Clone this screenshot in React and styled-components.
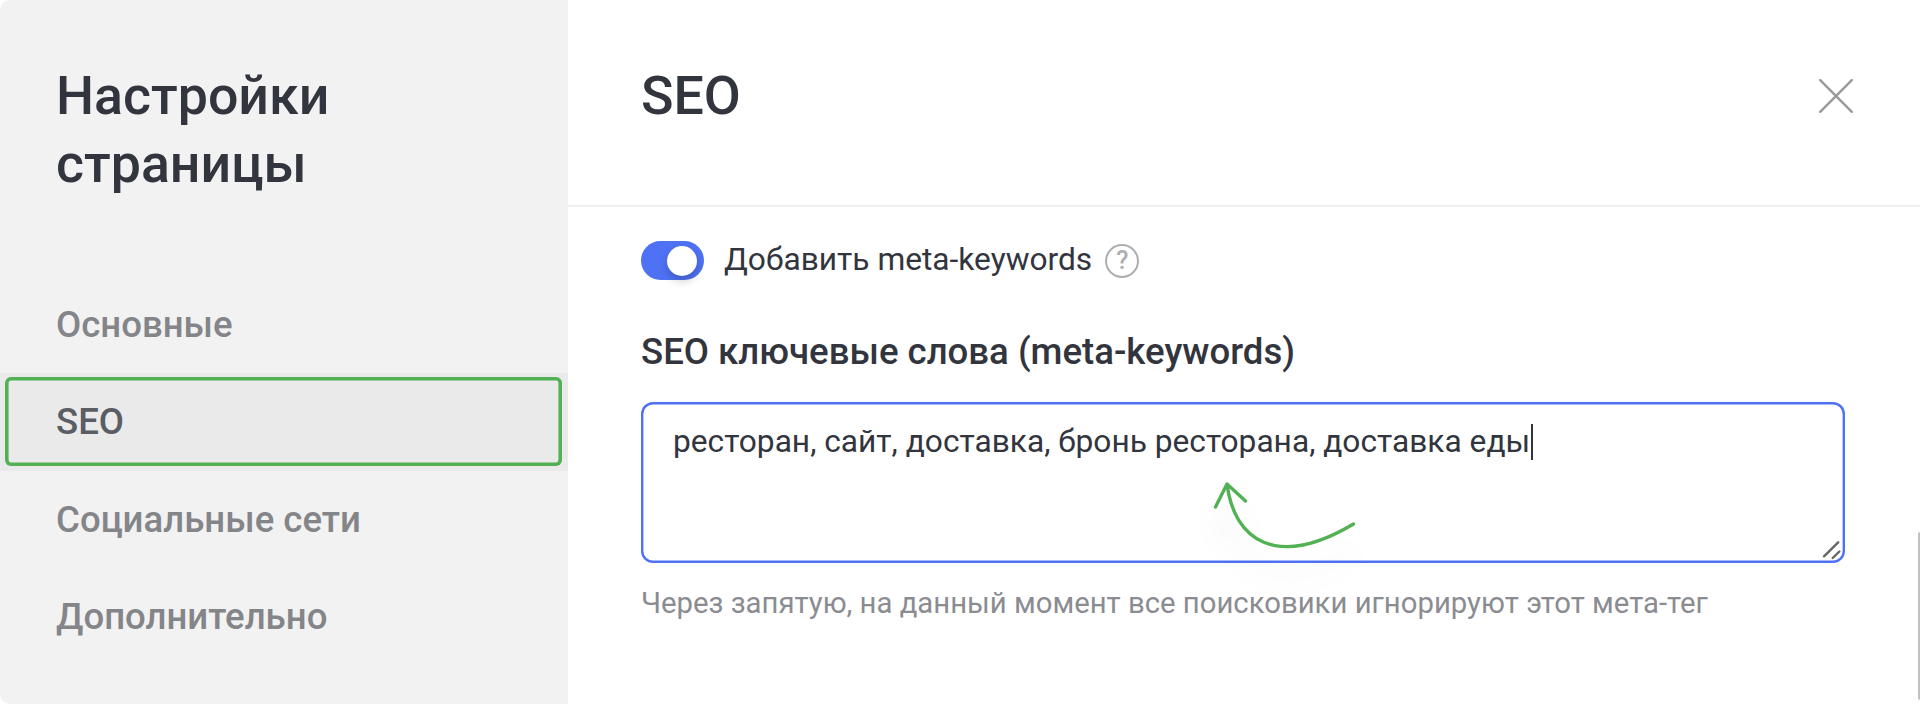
import React from 'react'
import styled, { createGlobalStyle } from 'styled-components'

const menu = [
  { id: 'main', title: 'Основные' },
  { id: 'seo', title: 'SEO' },
  { id: 'social', title: 'Социальные сети' },
  { id: 'extra', title: 'Дополнительно' },
]

const App = () => {
  const active = 'seo'
  return (
    <>
      <GlobalStyle />
      <StyleModal>
        <StyleSideBar>
          <StyleTitle>Настройки<br />страницы</StyleTitle>
          <StyleMenu>
            {menu.map((item) => (
              <StyleMenuItem key={item.id} $active={item.id === active}>
                {item.title}
                {item.id === active && <StyleMark />}
              </StyleMenuItem>
            ))}
          </StyleMenu>
        </StyleSideBar>
        <StyleContent>
          <StyleHeader>
            <StyleTitle>SEO</StyleTitle>
            <StyleClose aria-label="Закрыть">
              <svg width="36" height="36" viewBox="0 0 36 36">
                <path d="M2.2 2.2L33.8 33.8M33.8 2.2L2.2 33.8" />
              </svg>
            </StyleClose>
          </StyleHeader>
          <StyleBody>
            <StyleSwitchRow>
              <StyleSwitch><span /></StyleSwitch>
              <StyleSwitchLabel>Добавить meta-keywords</StyleSwitchLabel>
              <StyleHelp>?</StyleHelp>
            </StyleSwitchRow>
            <StyleFieldName>SEO ключевые слова (meta-keywords)</StyleFieldName>
            <StyleField>
              <span>ресторан, сайт, доставка, бронь ресторана, доставка еды</span>
              <StyleCaret />
              <StyleResize width="20" height="20" viewBox="0 0 20 20">
                <path d="M2 16.3L16.2 2.3M10.7 18L17.4 11.5" />
              </StyleResize>
              <StyleArrow width="160" height="90" viewBox="1205 474 160 90">
                <path d="M1353.5 524C1276 570 1234 540 1227 484M1215.5 507L1227 484L1245.5 501" />
              </StyleArrow>
            </StyleField>
            <StyleHint>Через запятую, на данный момент все поисковики игнорируют этот мета-тег</StyleHint>
          </StyleBody>
          <StyleScroll />
        </StyleContent>
      </StyleModal>
    </>
  )
}

const GlobalStyle = createGlobalStyle`
*{
  box-sizing: border-box;
  margin: 0;
  padding: 0;
}
body{
  background-color: white;
  font-family: Roboto, "Liberation Sans", sans-serif;
  color: #32353d;
}
`

const StyleModal = styled.div`
display: flex;
width: 1920px;
height: 704px;
overflow: hidden;
border-radius: 10px 0 0 10px;
background-color: white;
`

// sidebar
const StyleSideBar = styled.aside`
display: flex;
flex-direction: column;
width: 568px;
padding-top: 62px;
background-color: #f2f2f2;
`
const StyleTitle = styled.h2`
font-size: 53.7px;
font-weight: 500;
line-height: 68.3px;
${StyleSideBar} &{
  padding-left: 56px;
}
`
const StyleMenu = styled.ul`
margin-top: 77px;
list-style: none;
`
const StyleMenuItem = styled.li`
position: relative;
display: flex;
align-items: center;
height: 97.5px;
padding-left: 56px;
font-size: 36.6px;
font-weight: 500;
color: ${({ $active }) => ($active ? '#5b5d64' : '#848589')};
background-color: ${({ $active }) => ($active ? '#eaeaea' : 'transparent')};
`
const StyleMark = styled.span`
position: absolute;
top: 4px;
right: 6px;
bottom: 5px;
left: 5px;
border-radius: 6px;
box-shadow: inset 0 0 0 3.6px #53b155;
`

// content
const StyleContent = styled.main`
position: relative;
flex: 1;
`
const StyleHeader = styled.header`
display: flex;
justify-content: space-between;
align-items: flex-start;
height: 207px;
padding: 62px 66px 0 73px;
border-bottom: 2px solid #f0f0f1;
`
const StyleClose = styled.button`
display: flex;
margin-top: 16px;
border: none;
background: none;
cursor: pointer;
path{
  stroke: #98999c;
  stroke-width: 2.4;
  stroke-linecap: round;
}
`
const StyleBody = styled.div`
padding: 34px 75px 0 73px;
`
const StyleSwitchRow = styled.div`
display: flex;
align-items: center;
height: 39px;
`
const StyleSwitch = styled.span`
display: flex;
align-items: center;
justify-content: flex-end;
width: 63px;
height: 39px;
padding-right: 7px;
border-radius: 20px;
background-color: #4f72f5;
span{
  width: 30px;
  height: 30px;
  border-radius: 50%;
  background-color: white;
  box-shadow: 0 5px 10px rgba(0,0,0,0.2);
}
`
const StyleSwitchLabel = styled.span`
margin: -2px 13px 0 20px;
font-size: 31.7px;
`
const StyleHelp = styled.span`
display: flex;
align-items: center;
justify-content: center;
width: 34px;
height: 34px;
border: 2px solid #adaeb1;
border-radius: 50%;
font-size: 25px;
font-weight: 500;
color: #adaeb1;
`
const StyleFieldName = styled.h3`
margin-top: 48px;
font-size: 36.6px;
font-weight: 500;
line-height: 48px;
`
const StyleField = styled.div`
position: relative;
display: flex;
align-items: flex-start;
width: 1204px;
height: 161px;
margin-top: 26px;
padding: 18px 32px;
border-radius: 12px;
box-shadow: inset 0 0 0 2.4px #4f72f5;
font-size: 31.7px;
line-height: 44px;
`
const StyleCaret = styled.i`
width: 2px;
height: 36px;
margin: 4px 0 0 1px;
background-color: #32353d;
`
const StyleResize = styled.svg`
position: absolute;
right: 3px;
bottom: 3px;
path{
  stroke: #666;
  stroke-width: 2.4;
  stroke-linecap: round;
}
`
// hand-drawn pointer over the field
const StyleArrow = styled.svg`
position: absolute;
top: 72px;
left: 564px;
overflow: visible;
filter: drop-shadow(0 28px 14px rgba(0,0,0,0.07));
path{
  fill: none;
  stroke: #53b155;
  stroke-width: 3.4;
  stroke-linecap: round;
  stroke-linejoin: round;
}
`
const StyleHint = styled.p`
margin-top: 22px;
font-size: 29.3px;
line-height: 36px;
color: #8b8c91;
`
const StyleScroll = styled.span`
position: absolute;
top: 532px;
right: 0;
width: 2px;
height: 168px;
border-radius: 2px 0 0 2px;
background-color: #c1c1c1;
`
export default App
